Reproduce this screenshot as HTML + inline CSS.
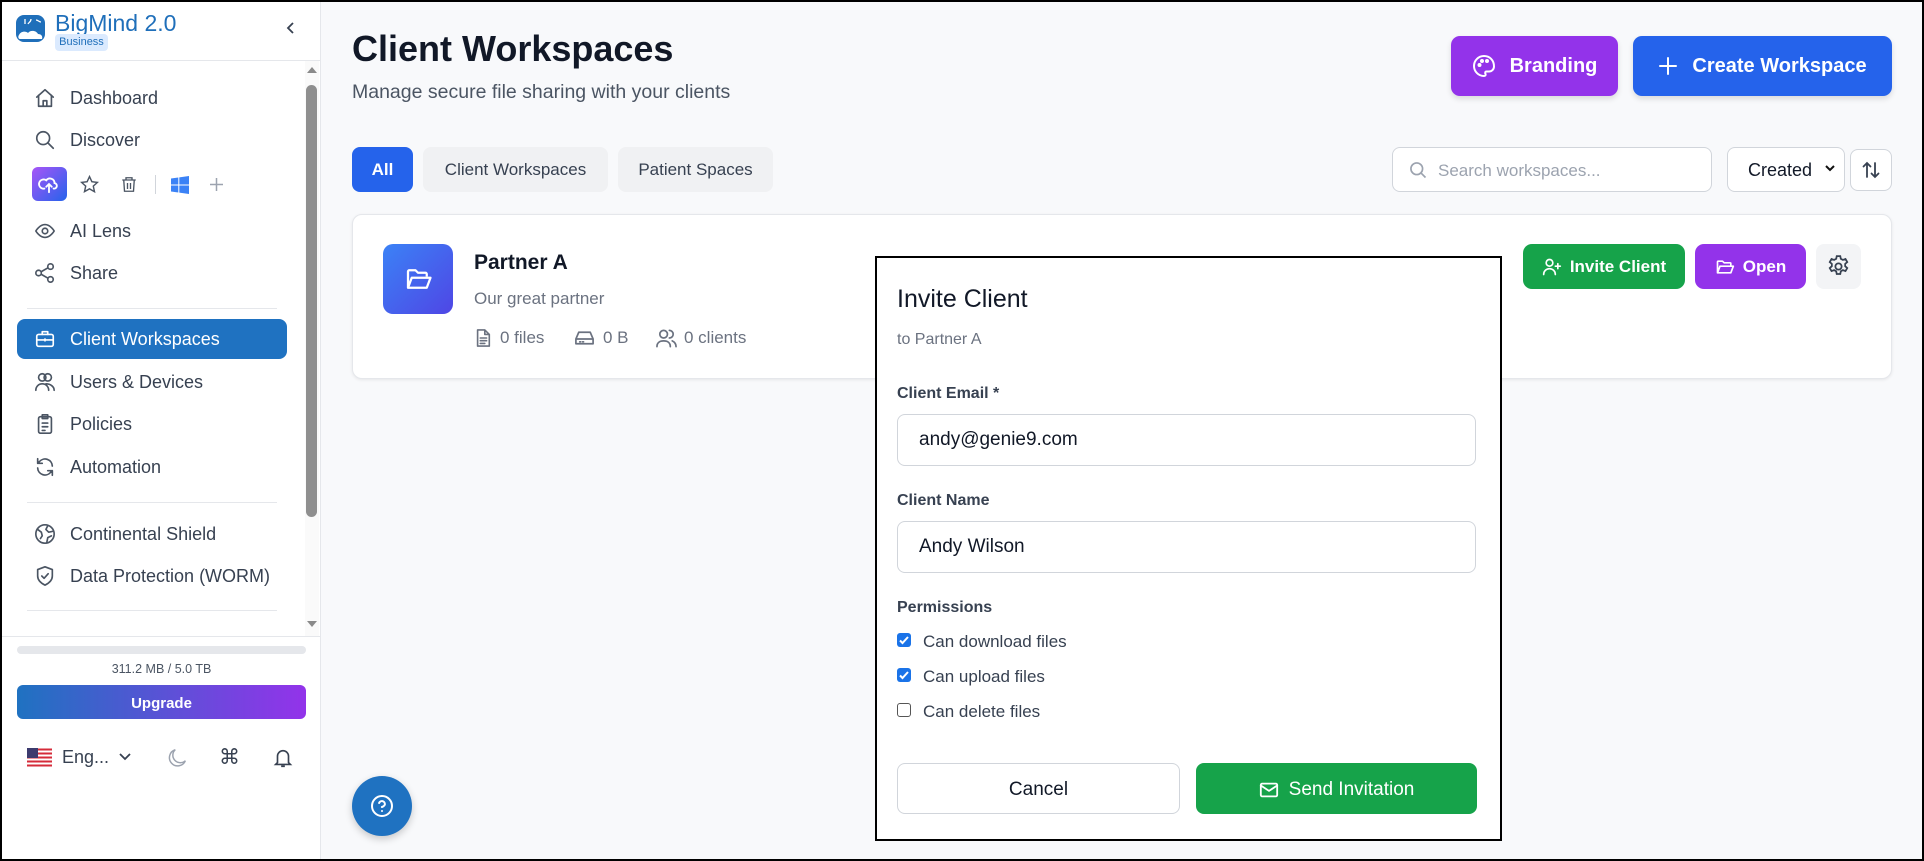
<!DOCTYPE html>
<html><head><meta charset="utf-8"><style>
*{box-sizing:border-box;margin:0;padding:0}
body{width:1924px;height:861px;overflow:hidden;font-family:"Liberation Sans",sans-serif;background:#f8f9fb;position:relative;color:#111827}
.frame{position:absolute;inset:0;border:2px solid #000;pointer-events:none;z-index:50}
.abs{position:absolute}
.side{position:absolute;left:0;top:0;width:321px;height:861px;background:#fff;border-right:1px solid #e5e7eb}
.nav{position:absolute;left:34px;font-size:18px;color:#374151;display:flex;align-items:center;height:30px}
.nav svg{width:22px;height:22px;margin-right:14px;stroke:#4b5563;fill:none;stroke-width:1.8;stroke-linecap:round;stroke-linejoin:round}
.hr{position:absolute;left:27px;width:250px;height:1px;background:#e5e7eb}
.btn{position:absolute;display:flex;align-items:center;justify-content:center;color:#fff;font-weight:bold;border-radius:9px}
.btn svg{fill:none;stroke:#fff;stroke-width:2;stroke-linecap:round;stroke-linejoin:round}
.tab{position:absolute;top:147px;height:45px;border-radius:8px;display:flex;align-items:center;justify-content:center;font-size:17px;color:#374151;background:#f0f1f3}
.lbl{position:absolute;left:897px;font-size:16px;font-weight:bold;color:#374151}
.inp{position:absolute;left:897px;width:579px;height:52px;border:1px solid #d1d5db;border-radius:8px;font-size:19px;padding-left:21px;display:flex;align-items:center;color:#111827;background:#fff}
.cb{position:absolute;left:897px;width:14px;height:14px;border-radius:3px}
.cbl{position:absolute;left:923px;font-size:17px;color:#374151}
.st svg{stroke:#6b7280;fill:none;stroke-width:1.8;stroke-linecap:round;stroke-linejoin:round}
</style></head><body>
<div class="frame"></div>
<div class="side">
  <svg class="abs" style="left:16px;top:15px" width="29" height="27" viewBox="0 0 29 27"><rect x="0" y="0" width="29" height="27" rx="8" fill="#1f6fba"/><path d="M3 20c2-4 7-4 9-2 2-3 8-3 10 1 3 0 5 2 4 5H4c-2 0-2-3-1-4z" fill="#fff"/><path d="M9 4v5M15 4c0 3-2 3-3 5M20 5c2 0 3 2 5 2" stroke="#fff" stroke-width="1.3" fill="none"/></svg>
  <div class="abs" style="left:55px;top:10px;font-size:23px;color:#1f6fba">BigMind 2.0</div>
  <div class="abs" style="left:55px;top:34px;width:53px;height:17px;background:#dbeafe;border-radius:4px;font-size:11px;color:#1f6fba;text-align:center;line-height:17px">Business</div>
  <svg class="abs" style="left:284px;top:20px" width="14" height="16" viewBox="0 0 14 16"><path d="M9 3L4 8l5 5" stroke="#374151" stroke-width="1.8" fill="none"/></svg>
  <div class="abs" style="left:0;top:60px;width:320px;height:1px;background:#e5e7eb"></div>

  <div class="nav" style="top:83px"><svg viewBox="0 0 24 24"><path d="M3 11l9-8 9 8M5 9v12h14V9M10 21v-6h4v6"/></svg>Dashboard</div>
  <div class="nav" style="top:125px"><svg viewBox="0 0 24 24"><circle cx="10" cy="10" r="7"/><path d="M15 15l6 6"/></svg>Discover</div>
  <div class="abs" style="left:32px;top:167px;width:35px;height:34px;border-radius:6px;background:linear-gradient(135deg,#a855f7,#2563eb)"></div>
  <svg class="abs" style="left:38px;top:173px" width="22" height="22" viewBox="0 0 24 24" fill="none" stroke="#fff" stroke-width="2" stroke-linecap="round"><path d="M7 17a5 5 0 1 1 2-9 5 5 0 0 1 9 3 3 3 0 0 1-1 6M12 12v9M9 15l3-3 3 3"/></svg>
  <svg class="abs" style="left:80px;top:175px" width="19" height="19" viewBox="0 0 24 24" fill="none" stroke="#4b5563" stroke-width="1.8"><path d="M12 2l3 6.5 7 .8-5.2 4.8 1.5 7L12 17.5 5.7 21l1.5-7L2 9.3l7-.8z"/></svg>
  <svg class="abs" style="left:120px;top:175px" width="18" height="19" viewBox="0 0 24 24" fill="none" stroke="#4b5563" stroke-width="1.8"><path d="M3 6h18M8 6V3h8v3M5 6l1 15h12l1-15M10 10v8M14 10v8"/></svg>
  <div class="abs" style="left:155px;top:175px;width:1px;height:19px;background:#d1d5db"></div>
  <svg class="abs" style="left:171px;top:176px" width="18" height="18" viewBox="0 0 18 18" fill="#3b82f6"><path d="M0 2.5l7.3-1v7H0zM8.3 1.4L18 0v8.5H8.3zM0 9.5h7.3v7L0 15.5zM8.3 9.5H18V18l-9.7-1.4z"/></svg>
  <svg class="abs" style="left:209px;top:177px" width="15" height="15" viewBox="0 0 15 15" stroke="#9ca3af" stroke-width="1.5"><path d="M7.5 1v13M1 7.5h13"/></svg>
  <div class="nav" style="top:216px"><svg viewBox="0 0 24 24"><path d="M2 12s4-7 10-7 10 7 10 7-4 7-10 7S2 12 2 12z"/><circle cx="12" cy="12" r="3"/></svg>AI Lens</div>
  <div class="nav" style="top:258px"><svg viewBox="0 0 24 24"><circle cx="18" cy="5" r="3"/><circle cx="5" cy="12" r="3"/><circle cx="18" cy="19" r="3"/><path d="M8 10.5l7-4M8 13.5l7 4"/></svg>Share</div>
  <div class="hr" style="top:308px"></div>
  <div class="abs" style="left:17px;top:319px;width:270px;height:40px;border-radius:8px;background:#1f72c1"></div>
  <div class="nav" style="top:324px;color:#fff"><svg viewBox="0 0 24 24" style="stroke:#fff"><rect x="3" y="7" width="18" height="13" rx="2"/><path d="M9 7V4h6v3M3 13h18M12 12v2"/></svg>Client Workspaces</div>
  <div class="nav" style="top:367px"><svg viewBox="0 0 24 24"><circle cx="9" cy="7" r="4"/><circle cx="15" cy="7" r="4"/><path d="M2 21c0-4 3-7 7-7s7 3 7 7M13 14c5 0 9 3 9 7"/></svg>Users &amp; Devices</div>
  <div class="nav" style="top:409px"><svg viewBox="0 0 24 24"><rect x="5" y="4" width="14" height="18" rx="2"/><path d="M9 2h6v4H9zM9 11h6M9 15h6M9 19h3"/></svg>Policies</div>
  <div class="nav" style="top:452px"><svg viewBox="0 0 24 24"><path d="M20 11a8 8 0 0 0-14-5L4 8M4 3v5h5M4 13a8 8 0 0 0 14 5l2-2M20 21v-5h-5"/></svg>Automation</div>
  <div class="hr" style="top:502px"></div>
  <div class="nav" style="top:519px"><svg viewBox="0 0 24 24"><circle cx="12" cy="12" r="10"/><path d="M4 7l4 3 1 4-2 3M15 3l-2 4 3 3 5-1M14 21l1-5 4-2"/></svg>Continental Shield</div>
  <div class="nav" style="top:561px"><svg viewBox="0 0 24 24"><path d="M12 2l8 3v7c0 5-4 8-8 10-4-2-8-5-8-10V5z"/><path d="M8.5 12l2.5 2.5 4.5-5"/></svg>Data Protection (WORM)</div>
  <div class="hr" style="top:610px"></div>
  <div class="abs" style="left:305px;top:61px;width:14px;height:575px;background:#fafafa"></div>
  <div class="abs" style="left:307px;top:67px;width:0;height:0;border-left:5px solid transparent;border-right:5px solid transparent;border-bottom:6px solid #8a8a8a"></div>
  <div class="abs" style="left:306px;top:85px;width:11px;height:432px;border-radius:6px;background:#8f8f8f"></div>
  <div class="abs" style="left:307px;top:621px;width:0;height:0;border-left:5px solid transparent;border-right:5px solid transparent;border-top:6px solid #8a8a8a"></div>
  <div class="abs" style="left:0;top:636px;width:320px;height:1px;background:#e5e7eb"></div>
  <div class="abs" style="left:17px;top:646px;width:289px;height:8px;border-radius:4px;background:#e5e7eb"></div>
  <div class="abs" style="left:17px;top:662px;width:289px;text-align:center;font-size:12.5px;color:#4b5563">311.2 MB / 5.0 TB</div>
  <div class="abs" style="left:17px;top:685px;width:289px;height:34px;border-radius:6px;background:linear-gradient(90deg,#1f72c1,#9333ea);color:#fff;font-weight:bold;font-size:15px;text-align:center;line-height:38px">Upgrade</div>
  <svg class="abs" style="left:27px;top:748px" width="25" height="19" viewBox="0 0 25 19"><rect width="25" height="19" rx="2" fill="#fff"/><path d="M0 1.5h25M0 5.5h25M0 9.5h25M0 13.5h25M0 17.5h25" stroke="#d52b3a" stroke-width="2"/><rect width="11" height="10" fill="#3c3b6e"/></svg>
  <div class="abs" style="left:62px;top:747px;font-size:18px;color:#374151">Eng...</div>
  <svg class="abs" style="left:118px;top:752px" width="14" height="10" viewBox="0 0 14 10"><path d="M2 2l5 5 5-5" stroke="#374151" stroke-width="1.8" fill="none"/></svg>
  <svg class="abs" style="left:167px;top:747px" width="22" height="22" viewBox="0 0 24 24" fill="none" stroke="#9ca3af" stroke-width="1.6"><path d="M20 15A9 9 0 1 1 9 3a7 7 0 0 0 11 12z"/></svg>
  <div class="abs" style="left:219px;top:745px;font-size:21px;color:#374151">⌘</div>
  <svg class="abs" style="left:272px;top:746px" width="22" height="24" viewBox="0 0 24 24" fill="none" stroke="#374151" stroke-width="1.8"><path d="M6 17V10a6 6 0 0 1 12 0v7l2 2H4zM10 21h4"/></svg>
</div>

<div class="abs" style="left:352px;top:28px;font-size:36px;font-weight:bold;color:#111827">Client Workspaces</div>
<div class="abs" style="left:352px;top:81px;font-size:19.5px;color:#4b5563">Manage secure file sharing with your clients</div>
<div class="tab" style="left:352px;width:61px;background:#2563eb;color:#fff;font-weight:bold">All</div>
<div class="tab" style="left:423px;width:185px">Client Workspaces</div>
<div class="tab" style="left:618px;width:155px">Patient Spaces</div>

<div class="btn" style="left:1451px;top:36px;width:167px;height:60px;background:#9333ea;font-size:20px;box-shadow:0 3px 6px rgba(0,0,0,.12)"><svg width="24" height="24" viewBox="0 0 24 24" style="margin-right:14px"><path d="M12 2a10 10 0 0 0 0 20c1.5 0 2-1 1.5-2s-.5-2.5 1-2.5H17a5 5 0 0 0 5-5C22 6 17.5 2 12 2z"/><circle cx="7.5" cy="11" r="1"/><circle cx="10" cy="7" r="1"/><circle cx="15" cy="7" r="1"/></svg>Branding</div>
<div class="btn" style="left:1633px;top:36px;width:259px;height:60px;background:#2563eb;font-size:20px;box-shadow:0 3px 6px rgba(0,0,0,.12)"><svg width="20" height="20" viewBox="0 0 20 20" style="margin-right:14px"><path d="M10 2v16M2 10h16"/></svg>Create Workspace</div>

<div class="abs" style="left:1392px;top:147px;width:320px;height:45px;border:1px solid #d1d5db;border-radius:8px;background:#fff"></div>
<svg class="abs" style="left:1408px;top:160px" width="20" height="20" viewBox="0 0 24 24" fill="none" stroke="#9ca3af" stroke-width="2"><circle cx="10.5" cy="10.5" r="7"/><path d="M16 16l5 5"/></svg>
<div class="abs" style="left:1438px;top:161px;font-size:17px;color:#9ca3af">Search workspaces...</div>
<div class="abs" style="left:1727px;top:147px;width:118px;height:45px;border:1px solid #d1d5db;border-radius:8px;background:#fff"></div>
<div class="abs" style="left:1748px;top:160px;font-size:18px;color:#111827">Created</div>
<svg class="abs" style="left:1824px;top:164px" width="12" height="10" viewBox="0 0 12 10"><path d="M2 2l4 4 4-4" stroke="#111" stroke-width="2" fill="none"/></svg>
<div class="abs" style="left:1850px;top:149px;width:42px;height:42px;border:1px solid #d1d5db;border-radius:8px;background:#fff"></div>
<svg class="abs" style="left:1861px;top:160px" width="20" height="20" viewBox="0 0 20 20" fill="none" stroke="#374151" stroke-width="1.8" stroke-linecap="round"><path d="M6 17V3M2.5 6.5L6 3l3.5 3.5M14 3v14M10.5 13.5L14 17l3.5-3.5"/></svg>

<div class="abs" style="left:352px;top:214px;width:1540px;height:165px;background:#fff;border:1px solid #e5e7eb;border-radius:10px;box-shadow:0 1px 3px rgba(0,0,0,.08)"></div>
<div class="abs" style="left:383px;top:244px;width:70px;height:70px;border-radius:10px;background:linear-gradient(135deg,#3b82f6,#4f46e5)"></div>
<svg class="abs" style="left:403px;top:264px" width="30" height="30" viewBox="0 0 24 24" fill="none" stroke="#fff" stroke-width="1.8" stroke-linejoin="round"><path d="M4 19V6a1 1 0 0 1 1-1h5l2 2h6a1 1 0 0 1 1 1v2M4 19l3-8h15l-3 8z"/></svg>
<div class="abs" style="left:474px;top:251px;font-size:21px;font-weight:bold;color:#111827">Partner A</div>
<div class="abs" style="left:474px;top:289px;font-size:17px;color:#6b7280">Our great partner</div>
<div class="st">
<svg class="abs" style="left:474px;top:328px" width="18" height="20" viewBox="0 0 20 22"><path d="M4 2h8l5 5v13H4zM12 2v5h5M7 11h7M7 14h7M7 17h5"/></svg>
<div class="abs" style="left:500px;top:328px;font-size:17px;color:#6b7280">0 files</div>
<svg class="abs" style="left:574px;top:329px" width="21" height="18" viewBox="0 0 22 18"><path d="M2 10l3-7h12l3 7v5H2zM2 10h18M6 13h1M9 13h1"/></svg>
<div class="abs" style="left:603px;top:328px;font-size:17px;color:#6b7280">0 B</div>
<svg class="abs" style="left:656px;top:328px" width="21" height="20" viewBox="0 0 22 20"><circle cx="8" cy="6" r="4"/><path d="M1 19c0-4 3-6 7-6s7 2 7 6M14 2a4 4 0 0 1 0 8M17 13c2 1 4 3 4 6"/></svg>
<div class="abs" style="left:684px;top:328px;font-size:17px;color:#6b7280">0 clients</div>
</div>
<div class="btn" style="left:1523px;top:244px;width:162px;height:45px;background:#16a34a;font-size:17px"><svg width="20" height="20" viewBox="0 0 24 24" style="margin-right:8px"><circle cx="9" cy="7" r="4"/><path d="M2 21c0-4 3-7 7-7s7 3 7 7M19 8v6M16 11h6"/></svg>Invite Client</div>
<div class="btn" style="left:1695px;top:244px;width:111px;height:45px;background:#9333ea;font-size:17px"><svg width="20" height="20" viewBox="0 0 24 24" style="margin-right:8px"><path d="M3 19V6a1 1 0 0 1 1-1h5l2 2h7a1 1 0 0 1 1 1v2M3 19l3-8h16l-3 8z"/></svg>Open</div>
<div class="abs" style="left:1816px;top:244px;width:45px;height:45px;border-radius:8px;background:#f3f4f6"></div>
<svg class="abs" style="left:1826px;top:254px" width="25" height="25" viewBox="0 0 24 24" fill="none" stroke="#374151" stroke-width="1.7"><circle cx="12" cy="12" r="3"/><path d="M10.3 2h3.4l.5 2.6 2 1.1 2.5-.9 1.7 2.9-2 1.8v2.2l2 1.8-1.7 2.9-2.5-.9-2 1.1-.5 2.6h-3.4l-.5-2.6-2-1.1-2.5.9-1.7-2.9 2-1.8v-2.2l-2-1.8 1.7-2.9 2.5.9 2-1.1z"/></svg>

<div class="abs" style="left:352px;top:776px;width:60px;height:60px;border-radius:50%;background:#1f72c1;box-shadow:0 3px 8px rgba(0,0,0,.2)"></div>
<svg class="abs" style="left:370px;top:794px" width="24" height="24" viewBox="0 0 24 24" fill="none" stroke="#fff" stroke-width="2" stroke-linecap="round"><circle cx="12" cy="12" r="10"/><path d="M9.1 9a3 3 0 0 1 5.8 1c0 2-3 3-3 3M12 17h.01"/></svg>

<div class="abs" style="left:875px;top:256px;width:627px;height:585px;background:#fff;border:2px solid #000"></div>
<div class="abs" style="left:897px;top:285px;font-size:25px;color:#111827">Invite Client</div>
<div class="abs" style="left:897px;top:331px;font-size:16px;color:#6b7280">to Partner A</div>
<div class="lbl" style="top:385px">Client Email *</div>
<div class="inp" style="top:414px">andy@genie9.com</div>
<div class="lbl" style="top:492px">Client Name</div>
<div class="inp" style="top:521px">Andy Wilson</div>
<div class="lbl" style="top:599px">Permissions</div>
<div class="cb" style="top:633px;background:#1a73e8"><svg width="14" height="14" viewBox="0 0 14 14"><path d="M3 7.5l2.5 2.5L11 4" stroke="#fff" stroke-width="2" fill="none"/></svg></div>
<div class="cbl" style="top:632px">Can download files</div>
<div class="cb" style="top:668px;background:#1a73e8"><svg width="14" height="14" viewBox="0 0 14 14"><path d="M3 7.5l2.5 2.5L11 4" stroke="#fff" stroke-width="2" fill="none"/></svg></div>
<div class="cbl" style="top:667px">Can upload files</div>
<div class="cb" style="top:703px;border:1.5px solid #555;background:#fff"></div>
<div class="cbl" style="top:702px">Can delete files</div>
<div class="abs" style="left:897px;top:763px;width:283px;height:51px;border:1px solid #d1d5db;border-radius:8px;font-size:19px;color:#111827;display:flex;align-items:center;justify-content:center;padding-top:3px">Cancel</div>
<div class="btn" style="left:1196px;top:763px;width:281px;height:51px;background:#16a34a;font-size:19px;font-weight:normal;border-radius:8px;padding-top:3px"><svg width="20" height="18" viewBox="0 0 22 18" style="margin-right:10px"><rect x="2" y="2" width="18" height="14" rx="1.5"/><path d="M2 4l9 6 9-6"/></svg>Send Invitation</div>
</body></html>
